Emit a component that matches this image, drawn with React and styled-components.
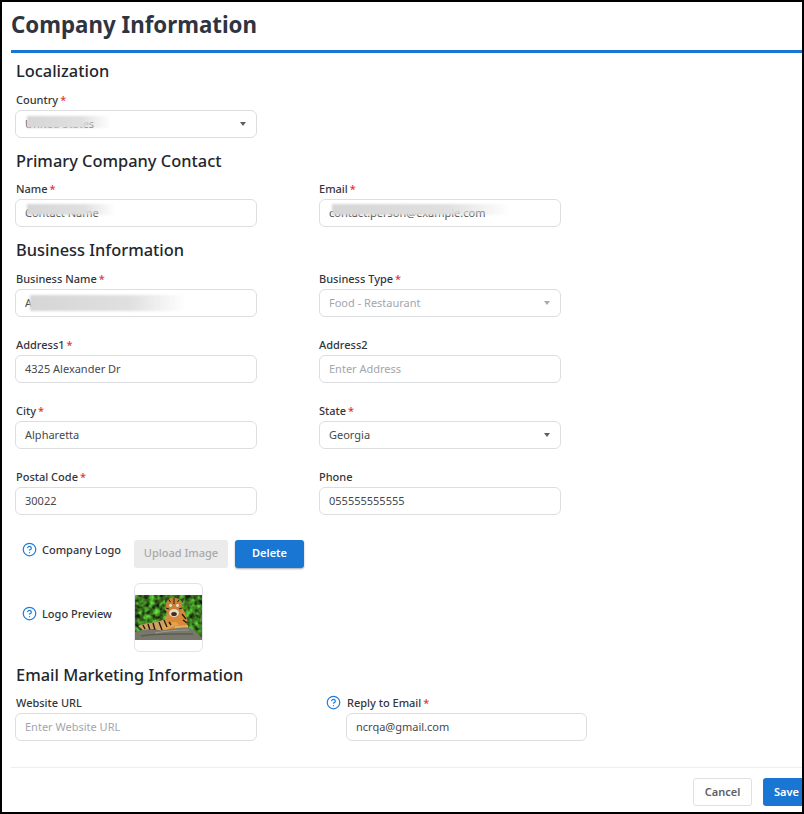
import React from 'react';
import styled, { createGlobalStyle } from 'styled-components';
import { CircleHelp } from 'lucide-react';

const GlobalStyle = createGlobalStyle`
  html, body {
    margin: 0;
    padding: 0;
    background: #ffffff;
  }
  body {
    font-family: 'Noto Sans', 'Open Sans', sans-serif;
  }
`;

const Frame = styled.div`
  width: 804px;
  height: 814px;
  box-sizing: border-box;
  border: 2px solid #000000;
  background: #ffffff;
  overflow: hidden;
`;

const Title = styled.h1`
  margin: 0 0 0 9px;
  height: 48px;
  line-height: 45px;
  font-size: 22.3px;
  font-weight: 700;
  color: #2f3441;
  border-bottom: 3px solid #1976d2;
  box-sizing: content-box;
`;

const Form = styled.div`
  padding: 0 0 0 13px;
`;

const SectionTitle = styled.h2`
  margin: 0;
  padding-left: 1px;
  height: 20px;
  line-height: 20px;
  font-size: 16.4px;
  font-weight: 500;
  color: #23262d;
  margin-top: ${p => p.$top}px;
`;

const Grid = styled.div`
  display: grid;
  grid-template-columns: 242px 242px;
  column-gap: 62px;
  row-gap: 20px;
  margin-top: ${p => p.$top || 10}px;
`;

const Field = styled.div`
  display: flex;
  flex-direction: column;
`;

const Label = styled.label`
  height: 15px;
  line-height: 15px;
  margin-bottom: 3px;
  padding-left: 1px;
  font-size: 11px;
  font-weight: 500;
  color: #33363c;

  ${Field}:nth-child(even) & {
    padding-left: 0;
  }
`;

const Star = styled.span`
  color: #e5343a;
  margin-left: 2px;
`;

const Box = styled.div`
  position: relative;
  display: flex;
  align-items: center;
  justify-content: space-between;
  height: 28px;
  box-sizing: border-box;
  padding: 0 10px 2px 9px;
  border: 1px solid #dcdee2;
  border-radius: 6px;
  background: #ffffff;
  font-size: 11px;
  color: ${p => (p.$muted ? '#a3a6ab' : '#45484d')};
  width: ${p => p.$width || 242}px;
`;

const Caret = styled.span`
  width: 0;
  height: 0;
  margin-top: 2px;
  border-left: 3.5px solid transparent;
  border-right: 3.5px solid transparent;
  border-top: 4px solid ${p => (p.$muted ? '#a8aaae' : '#5c5f64')};
`;

const Smudge = styled.span`
  position: absolute;
  left: ${p => p.$left}px;
  top: ${p => p.$top}px;
  width: ${p => p.$width}px;
  height: ${p => p.$height}px;
  background: linear-gradient(90deg, #d6d6d6 0%, #e0e0e0 65%, rgba(240, 240, 240, 0) 100%);
  filter: blur(1px);
`;

const LogoRow = styled.div`
  display: flex;
  align-items: flex-start;
  margin: ${p => p.$top}px 0 0 7px;
`;

const HelpLabel = styled.div`
  display: flex;
  align-items: center;
  gap: 5px;
  width: 112px;
  padding-top: ${p => p.$pad}px;
  font-size: 11px;
  font-weight: 500;
  color: #33363c;
`;

const HelpIcon = styled(CircleHelp)`
  width: 15px;
  height: 15px;
  flex: none;
  color: #1f7fdc;
`;

const Button = styled.button`
  height: 28px;
  padding: 0 0 3px;
  border: none;
  border-radius: 3px;
  font-family: inherit;
  font-size: 11px;
  font-weight: 500;
`;

const UploadButton = styled(Button)`
  width: 94px;
  background: #ebebeb;
  color: #a9a9a9;
  margin-right: 7px;
`;

const DeleteButton = styled(Button)`
  width: 69px;
  background: #1976d2;
  color: #ffffff;
  font-weight: 600;
  box-shadow: 0 1px 2px rgba(0, 0, 0, 0.35);
`;

const Preview = styled.div`
  display: flex;
  align-items: center;
  width: 69px;
  height: 69px;
  box-sizing: border-box;
  border: 1px solid #e2e3e6;
  border-radius: 6px;
`;

const ReplyField = styled.div`
  display: grid;
  grid-template-columns: 20px 241px;
  margin-left: 7px;
`;

const ReplyLabel = styled.div`
  grid-column: 1 / 3;
  display: flex;
  align-items: center;
  gap: 6px;
  height: 15px;
  margin-bottom: 3px;
  font-size: 11px;
  font-weight: 500;
  color: #33363c;
`;

const ReplyBox = styled(Box)`
  grid-column: 2;
`;

const Footer = styled.div`
  display: flex;
  justify-content: flex-end;
  gap: 11px;
  margin: 26px 0 0 9px;
  padding-top: 10px;
  border-top: 1px solid #eeeeee;
`;

const CancelButton = styled(Button)`
  width: 59px;
  padding-bottom: 1px;
  background: #ffffff;
  border: 1px solid #dfe0e2;
  color: #5d6066;
  font-weight: 600;
`;

const SaveButton = styled(Button)`
  flex: none;
  width: 55px;
  margin-right: -16px;
  padding: 0 8px 1px 0;
  background: #1976d2;
  color: #ffffff;
  font-weight: 600;
`;

const TigerPhoto = () => (
  <svg width="67" height="45" viewBox="0 0 67 45" aria-label="Tiger on a rock">
    <defs>
      <filter id="foliage" x="0" y="0" width="100%" height="100%" colorInterpolationFilters="sRGB">
        <feTurbulence type="fractalNoise" baseFrequency="0.2" numOctaves="2" seed="4" />
        <feColorMatrix
          type="matrix"
          values="0.5 0 0 0 -0.02  1.3 0 0 0 -0.17  0.3 0 0 0 -0.02  0 0 0 0 1"
        />
      </filter>
      <filter id="soft">
        <feGaussianBlur stdDeviation="0.45" />
      </filter>
    </defs>
    <rect width="67" height="45" fill="#3f7d25" filter="url(#foliage)" />
    <g filter="url(#soft)">
      <path d="M31 22 C33 14 38 12 46 12 C52 18 53 26 52 34 L31 35 Z" fill="#d88a38" />
      <path d="M3 31 C10 28 20 29 30 24 L36 33 L8 35 Z" fill="#cfa063" />
      <path d="M19 37 C26 31 33 27 41 27 L44 30 C38 31 32 34 27 38 Z" fill="#e6a24c" />
      <path d="M40 31 L53 30 L53 34 L39 36 Z" fill="#e6ab62" />
      <path d="M8 30 L10 34 M13 29 L15 35 M18 28 L20 35 M24 27 L27 35 M29 25 L32 32 M47 19 L51 24 M48 25 L52 28 M34 27 L36 30" stroke="#241c14" strokeWidth="1.4" />
      <path d="M30 8 L30 3 L34 4 Z M48 8 L49 3 L45 4 Z" fill="#4a3a26" />
      <ellipse cx="39" cy="12" rx="8.5" ry="9.5" fill="#c98236" />
      <ellipse cx="39" cy="18" rx="5" ry="4" fill="#e4dac8" />
      <ellipse cx="39" cy="19" rx="2.8" ry="2" fill="#4e2620" />
      <circle cx="35.5" cy="10.5" r="1.4" fill="#e9e4d8" />
      <circle cx="42.5" cy="10.5" r="1.4" fill="#e9e4d8" />
      <path d="M39 3 L39 9 M34 5 L35.5 7 M44 5 L42.5 7 M31 13 L34 14 M47 13 L44 14" stroke="#241c14" strokeWidth="1" />
      <path d="M0 37 L0 45 L67 45 L67 43 C63 39 60 35 54 33 C44 31 34 36 22 35 C12 34 6 35 0 37 Z" fill="#77776c" />
      <path d="M6 41 C20 38 36 39 58 39" stroke="#5c5c52" strokeWidth="1.5" fill="none" />
      <path d="M20 38 C30 36 42 35 54 35" stroke="#9a9a8f" strokeWidth="1" fill="none" />
    </g>
  </svg>
);

const App = () => (
  <>
    <GlobalStyle />
    <Frame>
      <Title>Company Information</Title>
      <Form>
        <SectionTitle $top={8}>Localization</SectionTitle>
        <Grid $top={11}>
          <Field>
            <Label>Country<Star>*</Star></Label>
            <Box>
              United States
              <Smudge $left={11} $top={5} $width={84} $height={12} />
              <Caret />
            </Box>
          </Field>
        </Grid>

        <SectionTitle $top={13}>Primary Company Contact</SectionTitle>
        <Grid>
          <Field>
            <Label>Name<Star>*</Star></Label>
            <Box>
              Contact Name
              <Smudge $left={11} $top={4} $width={88} $height={11} />
            </Box>
          </Field>
          <Field>
            <Label>Email<Star>*</Star></Label>
            <Box>
              contact.person@example.com
              <Smudge $left={12} $top={4} $width={178} $height={11} />
            </Box>
          </Field>
        </Grid>

        <SectionTitle $top={13}>Business Information</SectionTitle>
        <Grid $top={11}>
          <Field>
            <Label>Business Name<Star>*</Star></Label>
            <Box>
              A
              <Smudge $left={14} $top={5} $width={155} $height={16} />
            </Box>
          </Field>
          <Field>
            <Label>Business Type<Star>*</Star></Label>
            <Box $muted>Food - Restaurant<Caret $muted /></Box>
          </Field>
          <Field>
            <Label>Address1<Star>*</Star></Label>
            <Box>4325 Alexander Dr</Box>
          </Field>
          <Field>
            <Label>Address2</Label>
            <Box $muted>Enter Address</Box>
          </Field>
          <Field>
            <Label>City<Star>*</Star></Label>
            <Box>Alpharetta</Box>
          </Field>
          <Field>
            <Label>State<Star>*</Star></Label>
            <Box>Georgia<Caret /></Box>
          </Field>
          <Field>
            <Label>Postal Code<Star>*</Star></Label>
            <Box>30022</Box>
          </Field>
          <Field>
            <Label>Phone</Label>
            <Box>055555555555</Box>
          </Field>
        </Grid>

        <LogoRow $top={25}>
          <HelpLabel $pad={2}><HelpIcon />Company Logo</HelpLabel>
          <UploadButton>Upload Image</UploadButton>
          <DeleteButton>Delete</DeleteButton>
        </LogoRow>
        <LogoRow $top={15}>
          <HelpLabel $pad={23}><HelpIcon />Logo Preview</HelpLabel>
          <Preview><TigerPhoto /></Preview>
        </LogoRow>

        <SectionTitle $top={13}>Email Marketing Information</SectionTitle>
        <Grid>
          <Field>
            <Label>Website URL</Label>
            <Box $muted>Enter Website URL</Box>
          </Field>
          <ReplyField>
            <ReplyLabel><HelpIcon /><span>Reply to Email<Star>*</Star></span></ReplyLabel>
            <ReplyBox $width={241}>ncrqa@gmail.com</ReplyBox>
          </ReplyField>
        </Grid>
      </Form>
      <Footer>
        <CancelButton>Cancel</CancelButton>
        <SaveButton>Save</SaveButton>
      </Footer>
    </Frame>
  </>
);

export default App;
